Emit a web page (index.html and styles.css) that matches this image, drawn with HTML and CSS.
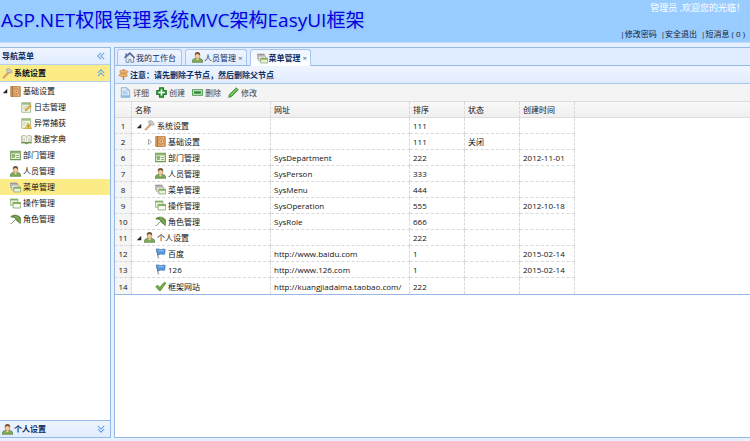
FILE: index.html
```html
<!DOCTYPE html>
<html lang="zh-CN">
<head>
<meta charset="utf-8">
<meta name="viewport" content="width=device-width, initial-scale=1">
<title>ASP.NET权限管理系统</title>
<link rel="stylesheet" href="styles.css">
</head>
<body>
<svg class="sprite" aria-hidden="true">
  <symbol id="i-hammer" viewBox="0 0 16 16"><path d="M1 14 9 5l2 2-8 8z" fill="#d9a878" stroke="#b98a58" stroke-width=".7"/><path d="M6 2c3-2 6-1 7 1l2 3-2 2-2-2-2 1-2-3z" fill="#ccc" stroke="#8a8a8a" stroke-width=".8"/></symbol>
  <symbol id="i-book" viewBox="0 0 16 16"><rect x="1" y="0" width="14" height="16" rx="1.500" fill="#d9a064" stroke="#a87040"/><path d="M3.500 0v16" stroke="#95602f"/><circle cx="9" cy="8" r="3.500" fill="#efd0a4" stroke="#c17a3c"/><circle cx="9" cy="8" r="1.300" fill="#b26a2c"/><path d="M12 1v3M12 12v3" stroke="#f0d6ae"/></symbol>
  <symbol id="i-log" viewBox="0 0 16 16"><path d="M1 1h13v14H1z" fill="#f2f6ea" stroke="#8aa572"/><path d="M1 1h13v3H1z" fill="#9fbd83"/><path d="M3 7h6M3 10h4" stroke="#a9b99a"/><path d="m6 13 1-3 6-6 2 2-6 6z" fill="#f1b13c" stroke="#b67a1d" stroke-width=".7"/></symbol>
  <symbol id="i-error" viewBox="0 0 16 16"><path d="M1 1h13v14H1z" fill="#f2f6ea" stroke="#8aa572"/><path d="M1 1h13v3H1z" fill="#9fbd83"/><path d="M3 7h5M3 10h3" stroke="#a9b99a"/><path d="m10.500 7 5 8.500h-10z" fill="#f4cf45" stroke="#b08a20" stroke-width=".8"/><path d="M10.500 10v3M10.500 13.500v1" stroke="#654a00"/></symbol>
  <symbol id="i-dict" viewBox="0 0 16 16"><path d="M1 3c3-1 5-1 7 1 2-2 4-2 7-1v10c-3-1-5-1-7 1-2-2-4-2-7-1z" fill="#fafaf4" stroke="#7d9465"/><path d="M8 4v10M3 5v6M5 5v6M11 5v6M13 5v6" stroke="#a4ad98" stroke-width=".8"/><path d="M1 13c3-1 5-1 7 1 2-2 4-2 7-1" fill="none" stroke="#668a42" stroke-width="2"/></symbol>
  <symbol id="i-form" viewBox="0 0 16 16"><path d="M1 2h14v12H1z" fill="#eff5e6" stroke="#709654" stroke-width="1.500"/><path d="M1 2h14v3H1z" fill="#8eb66b"/><path d="M3 7h4v2H3zM3 11h4M9 8h4M9 11h4" fill="#a6c889" stroke="#709654" stroke-width="1.200"/></symbol>
  <symbol id="i-user" viewBox="0 0 16 16"><path d="M0 15c0-4 2-5 5-5.500h6c3 .5 5 1.500 5 5.500z" fill="#7fa858" stroke="#5c823e"/><path d="m5.500 9.500 2.500 3 2.500-3z" fill="#fff1d8"/><ellipse cx="8" cy="5.500" rx="3.500" ry="4.500" fill="#f1c99a" stroke="#9a683e" stroke-width=".6"/><path d="M4.300 5C3.500 1.500 5.500 0 8 0s4.500 1.500 3.700 5C10 4 9 3 8 3s-2 1-3.700 2z" fill="#765139"/></symbol>
  <symbol id="i-menu" viewBox="0 0 16 16"><path d="M.5 1.500h10v7h-10z" fill="#ddd" stroke="#999"/><path d="M.5 2.500h10" stroke="#999" stroke-width="2"/><path d="M2.500 4.500h10v7h-10z" fill="#eee" stroke="#999"/><path d="M5.500 7.500h10v7h-10z" fill="#e8f1dc" stroke="#799f5a"/><path d="M5 8.500h11" stroke="#85ad61" stroke-width="2.500"/></symbol>
  <symbol id="i-windows" viewBox="0 0 16 16"><path d="M.5 1.500h11v9H.5z" fill="#e8f1dc" stroke="#799f5a"/><path d="M.5 2.500h11" stroke="#85ad61" stroke-width="2"/><path d="M4.500 6.500h11v8h-11z" fill="#f6faf0" stroke="#6e964e"/><path d="M4 7.500h12" stroke="#85ad61" stroke-width="2.500"/></symbol>
  <symbol id="i-umbrella" viewBox="0 0 16 16"><path d="M1 4C5 0 12 1 15 5c1 3 1 6 0 9-2-2-4-3-5-4-1-2-2-4-4-5-2 0-3 0-5-1z" fill="#659342" stroke="#44702a" stroke-width=".7"/><path d="m10 6-8 8q-1 1-1 0" fill="none" stroke="#79994f" stroke-width="1.400"/><path d="M7 3c3 1 6 4 7 8" fill="none" stroke="#a8c37f"/></symbol>
  <symbol id="i-flag" viewBox="0 0 16 16"><path d="m2 1 3 14" stroke="#888" stroke-width="1.500"/><path d="M2 2c3-2 5 1 8 0s4 0 5 0l-1 7c-3 1-4-1-6 0s-3 1-4 1z" fill="#5795dc" stroke="#2e69ae" stroke-width=".8"/><path d="M4 4c3-1 5 1 9 0" fill="none" stroke="#b4d5f7"/></symbol>
  <symbol id="i-check" viewBox="0 0 16 16"><path d="m1 8 3-2 3 3 6-7 3 1-8 11H6z" fill="#72ac45" stroke="#467c27" stroke-width=".8"/></symbol>
  <symbol id="i-home" viewBox="0 0 16 16"><path d="M3 8v7h4v-4h3v4h4V8L8.500 3z" fill="#e5eaf2" stroke="#586c8c"/><path d="m.5 8.500 8-7 7 7M3 5V2" fill="none" stroke="#4c638d" stroke-width="2"/></symbol>
  <symbol id="i-sign" viewBox="0 0 16 16"><path d="M7 0h2v16H7z" fill="#b8814d"/><path d="M3 2h9l3 2-3 2H3zM13 7H4L1 9l3 2h9z" fill="#eeb26b" stroke="#cd8846"/></symbol>
  <symbol id="i-detail" viewBox="0 0 16 16"><path d="M2 1h8l4 4v10H2z" fill="#deedfb" stroke="#6d9dcb"/><path d="M10 1v4h4M4 6h5M4 8h7M4 10h7" fill="none" stroke="#8ab4dc"/><path d="M1 12h14v3H1z" fill="#8dbce8"/></symbol>
  <symbol id="i-add" viewBox="0 0 16 16"><path d="M5 1h6v4h4v6h-4v4H5v-4H1V5h4z" fill="#43a047" stroke="#1f7a2b" stroke-width="1.500" stroke-linejoin="round"/><path d="M8 3.500v9M3.500 8h9" stroke="#fff" stroke-width="2"/></symbol>
  <symbol id="i-remove" viewBox="0 0 16 16"><path d="M1 4h14v8H1z" fill="#e6f4df" stroke="#3f9145" stroke-width="1.500"/><path d="M3 8h10" stroke="#248330" stroke-width="3.500"/></symbol>
  <symbol id="i-edit" viewBox="0 0 16 16"><path d="m1 15 1-4L12 1l3 3L5 14z" fill="#5cb344" stroke="#2c8126"/><path d="m4 12 9-9" stroke="#a7db92"/></symbol>
  <symbol id="i-open" viewBox="0 0 8 8"><path d="M7 1v6H1z" fill="#222"/></symbol>
  <symbol id="i-closed" viewBox="0 0 8 8"><path d="m2 .5 4 3.500-4 3.500z" fill="#fff" stroke="#888"/></symbol>
  <symbol id="i-chevrons" viewBox="0 0 10 10"><path d="M5 1 1 5l4 4M9 1 5 5l4 4" fill="none" stroke="#5fa2e4" stroke-width="1.300"/></symbol>
</svg>

<header class="banner">
  <h1>ASP.NET权限管理系统MVC架构EasyUI框架</h1>
  <div class="account">
    <p class="welcome">管理员 ,欢迎您的光临！</p>
    <nav class="account-links"><a href="#">|修改密码</a><a href="#">|安全退出</a><a href="#">|短消息 ( 0 )</a></nav>
  </div>
</header>

<div class="workspace">
  <aside class="sidebar">
    <div class="bar"><span class="grow">导航菜单</span><button class="arrow" aria-label="收起导航"><svg><use href="#i-chevrons"/></svg></button></div>
    <button class="bar selected"><svg class="icon"><use href="#i-hammer"/></svg><span class="grow">系统设置</span><svg class="chev up"><use href="#i-chevrons"/></svg></button>
    <ul class="tree">
      <li><a href="#"><svg class="toggle"><use href="#i-open"/></svg><svg class="icon"><use href="#i-book"/></svg>基础设置</a>
        <ul>
          <li><a href="#"><svg class="icon"><use href="#i-log"/></svg>日志管理</a></li>
          <li><a href="#"><svg class="icon"><use href="#i-error"/></svg>异常捕获</a></li>
          <li><a href="#"><svg class="icon"><use href="#i-dict"/></svg>数据字典</a></li>
        </ul>
      </li>
      <li><a href="#"><i class="toggle"></i><svg class="icon"><use href="#i-form"/></svg>部门管理</a></li>
      <li><a href="#"><i class="toggle"></i><svg class="icon"><use href="#i-user"/></svg>人员管理</a></li>
      <li><a href="#" class="current"><i class="toggle"></i><svg class="icon"><use href="#i-menu"/></svg>菜单管理</a></li>
      <li><a href="#"><i class="toggle"></i><svg class="icon"><use href="#i-windows"/></svg>操作管理</a></li>
      <li><a href="#"><i class="toggle"></i><svg class="icon"><use href="#i-umbrella"/></svg>角色管理</a></li>
    </ul>
    <button class="bar last"><svg class="icon"><use href="#i-user"/></svg><span class="grow">个人设置</span><svg class="chev down"><use href="#i-chevrons"/></svg></button>
  </aside>

  <main class="content">
    <div class="tabs">
      <button class="tab"><svg class="icon"><use href="#i-home"/></svg>我的工作台</button>
      <button class="tab"><svg class="icon"><use href="#i-user"/></svg>人员管理<span class="close">×</span></button>
      <button class="tab active"><svg class="icon"><use href="#i-menu"/></svg>菜单管理<span class="close">×</span></button>
    </div>
    <div class="notice"><svg class="icon"><use href="#i-sign"/></svg>注意：请先删除子节点，然后删除父节点</div>
    <div class="toolbar">
      <button><svg class="icon"><use href="#i-detail"/></svg>详细</button>
      <button><svg class="icon"><use href="#i-add"/></svg>创建</button>
      <button><svg class="icon"><use href="#i-remove"/></svg>删除</button>
      <button><svg class="icon"><use href="#i-edit"/></svg>修改</button>
    </div>
    <table class="grid">
      <colgroup><col class="c-num"><col class="c-wide"><col class="c-wide"><col class="c-small"><col class="c-small"><col class="c-small"><col></colgroup>
      <thead><tr><th></th><th>名称</th><th>网址</th><th>排序</th><th>状态</th><th>创建时间</th><th></th></tr></thead>
      <tbody>
        <tr><th>1</th><td><div class="node"><svg class="toggle"><use href="#i-open"/></svg><svg class="icon"><use href="#i-hammer"/></svg>系统设置</div></td><td></td><td>111</td><td></td><td></td><td></td></tr>
        <tr><th>2</th><td><div class="node child"><svg class="toggle"><use href="#i-closed"/></svg><svg class="icon"><use href="#i-book"/></svg>基础设置</div></td><td></td><td>111</td><td>关闭</td><td></td><td></td></tr>
        <tr><th>6</th><td><div class="node child"><i class="toggle"></i><svg class="icon"><use href="#i-form"/></svg>部门管理</div></td><td>SysDepartment</td><td>222</td><td></td><td>2012-11-01</td><td></td></tr>
        <tr><th>7</th><td><div class="node child"><i class="toggle"></i><svg class="icon"><use href="#i-user"/></svg>人员管理</div></td><td>SysPerson</td><td>333</td><td></td><td></td><td></td></tr>
        <tr><th>8</th><td><div class="node child"><i class="toggle"></i><svg class="icon"><use href="#i-menu"/></svg>菜单管理</div></td><td>SysMenu</td><td>444</td><td></td><td></td><td></td></tr>
        <tr><th>9</th><td><div class="node child"><i class="toggle"></i><svg class="icon"><use href="#i-windows"/></svg>操作管理</div></td><td>SysOperation</td><td>555</td><td></td><td>2012-10-18</td><td></td></tr>
        <tr><th>10</th><td><div class="node child"><i class="toggle"></i><svg class="icon"><use href="#i-umbrella"/></svg>角色管理</div></td><td>SysRole</td><td>666</td><td></td><td></td><td></td></tr>
        <tr><th>11</th><td><div class="node"><svg class="toggle"><use href="#i-open"/></svg><svg class="icon"><use href="#i-user"/></svg>个人设置</div></td><td></td><td>222</td><td></td><td></td><td></td></tr>
        <tr><th>12</th><td><div class="node child"><i class="toggle"></i><svg class="icon"><use href="#i-flag"/></svg>百度</div></td><td>http://www.baidu.com</td><td>1</td><td></td><td>2015-02-14</td><td></td></tr>
        <tr><th>13</th><td><div class="node child"><i class="toggle"></i><svg class="icon"><use href="#i-flag"/></svg>126</div></td><td>http://www.126.com</td><td>1</td><td></td><td>2015-02-14</td><td></td></tr>
        <tr><th>14</th><td><div class="node child"><i class="toggle"></i><svg class="icon"><use href="#i-check"/></svg>框架网站</div></td><td>http://kuangjiadaima.taobao.com/</td><td>222</td><td></td><td></td><td></td></tr>
      </tbody>
    </table>
  </main>
</div>
</body>
</html>
```
FILE: styles.css
```css
* {
  box-sizing: border-box;
}

body {
  margin: 0;
  min-height: 100vh;
  display: flex;
  flex-direction: column;
  background: #e6f0ff;
  color: #111;
  font: 8px/16px "Open Sans", "Noto Sans CJK SC", sans-serif;
}

button {
  margin: 0;
  padding: 0;
  border: 0;
  background: none;
  color: inherit;
  font: inherit;
  text-align: left;
  cursor: pointer;
}

a {
  color: inherit;
  text-decoration: none;
}

.sprite {
  position: absolute;
  width: 0;
  height: 0;
}

.icon {
  flex: none;
  width: 11px;
  height: 11px;
}

.toggle {
  flex: none;
  width: 6px;
  height: 6px;
}

.grow {
  flex: 1;
}

/* Banner */

.banner {
  display: flex;
  justify-content: space-between;
  height: 43px;
  background: #99ccff;
  border-bottom: 1px solid #c4dcf8;
}

h1 {
  margin: 0;
  padding-left: 1px;
  color: #0000e0;
  font-size: 19px;
  font-weight: 400;
  line-height: 40px;
  white-space: nowrap;
  text-shadow: 1px 1px 2px #86b2ea;
}

.account {
  display: flex;
  flex-direction: column;
  justify-content: space-between;
  padding-right: 5px;
  text-align: right;
  white-space: nowrap;
}

.welcome {
  margin: 0;
  color: #fff;
  font-size: 9px;
}

.account-links {
  display: flex;
  justify-content: flex-end;
  gap: 4px;
  color: #123;
}

/* Layout */

.workspace {
  flex: 1;
  display: flex;
  gap: 3px;
  padding: 4px 0 3px;
}

.sidebar {
  flex: none;
  width: 111px;
  display: flex;
  flex-direction: column;
  background: #fff;
  border: 1px solid #95b8e7;
  border-left: 0;
}

.content {
  flex: 1;
  min-width: 0;
  background: #fff;
  border: 1px solid #95b8e7;
  border-right: 0;
}

/* Sidebar */

.bar {
  display: flex;
  align-items: center;
  gap: 1px;
  height: 17px;
  padding: 0 5px 0 2px;
  background: linear-gradient(#eff5ff, #e0ecff);
  border-bottom: 1px solid #b5cff0;
  color: #0e2d5f;
  font-weight: 700;
}

.bar.selected {
  background: #fbec88;
  color: #111;
}

.bar.last {
  margin-top: auto;
  border-top: 1px solid #95b8e7;
  border-bottom: 0;
}

.arrow {
  display: flex;
}

.arrow svg,
.chev {
  width: 8px;
  height: 8px;
}

.chev.up {
  transform: rotate(90deg);
}

.chev.down {
  transform: rotate(-90deg);
}

.tree,
.tree ul {
  margin: 0;
  padding: 0;
  list-style: none;
}

.tree {
  padding-top: 1px;
}

.tree a {
  display: flex;
  align-items: center;
  gap: 2px;
  height: 16px;
  padding-left: 2px;
}

.tree ul a {
  padding-left: 21px;
}

.tree .current {
  background: #fbec88;
}

/* Tabs */

.tabs {
  display: flex;
  align-items: flex-end;
  gap: 3px;
  height: 18px;
  padding-left: 2px;
  background: #e0ecff;
  border-bottom: 1px solid #95b8e7;
}

.tab {
  display: flex;
  align-items: center;
  gap: 1px;
  height: 16px;
  padding: 0 5px 0 6px;
  border: 1px solid #a9c6ec;
  border-bottom: 0;
  border-radius: 3px 3px 0 0;
  background: linear-gradient(#eff5ff, #e0ecff);
  color: #0e2d5f;
}

.tab:has(.close) {
  padding-right: 3px;
}

.tab.active {
  height: 17px;
  margin-bottom: -1px;
  background: linear-gradient(#eff5ff, #fff);
  font-weight: 700;
}

.close {
  padding-left: 1px;
  color: #557;
  font-weight: 400;
}

/* Notice and toolbar */

.notice {
  display: flex;
  align-items: center;
  gap: 1px;
  height: 18px;
  padding-left: 3px;
  background: linear-gradient(#eff5ff, #e0ecff);
  border-bottom: 1px solid #a9c6ec;
  color: #0e2d5f;
  font-weight: 700;
}

.toolbar {
  display: flex;
  align-items: center;
  gap: 7px;
  height: 18px;
  padding-left: 5px;
  background: #f4f4f4;
  border-bottom: 1px solid #ddd;
  color: #444;
}

.toolbar button {
  display: flex;
  align-items: center;
  gap: 2px;
}

/* Tree grid */

.grid {
  width: 100%;
  table-layout: fixed;
  border-collapse: separate;
  border-spacing: 0;
  border-bottom: 1px solid #95b8e7;
}

.c-num {
  width: 17px;
}

.c-wide {
  width: 139px;
}

.c-small {
  width: 55px;
}

.grid th,
.grid td {
  height: 16px;
  padding: 0 0 0 3px;
  border: 0 dashed #d8d8d8;
  border-width: 0 1px 1px 0;
  font-weight: 400;
  line-height: 15px;
  text-align: left;
  white-space: nowrap;
}

.grid thead th {
  background: linear-gradient(#f9f9f9, #efefef);
  border-bottom: 1px solid #ddd;
}

.grid tbody th {
  padding: 0;
  background: #f5f5f5;
  text-align: center;
}

.grid th:last-child,
.grid td:last-child {
  border-right: 0;
}

.grid tbody td:last-child {
  border-bottom: 0;
}

.grid tbody tr:last-child > * {
  border-bottom: 0;
}

.node {
  display: flex;
  align-items: center;
  gap: 2px;
  height: 15px;
  padding-left: 1px;
}

.node.child {
  padding-left: 12px;
}
```
